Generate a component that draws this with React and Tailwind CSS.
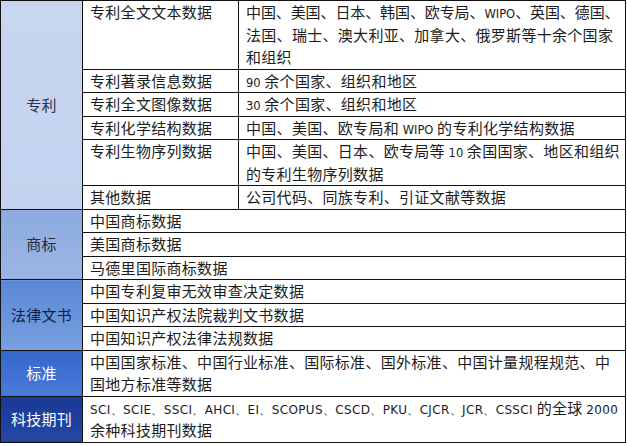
import React from "react"

const cjk = { fontFamily: '"Noto Sans CJK SC", "Noto Sans", sans-serif' }

const L = ({ children, wide }) => (
  <span
    className={`font-['DejaVu_Sans',sans-serif] leading-none ${
      wide ? "text-[12px] tracking-[0.35px]" : "text-[11.5px] tracking-normal"
    }`}
  >
    {children}
  </span>
)

const patentRows = [
  {
    name: "专利全文文本数据",
    desc: [
      <span className="tracking-[-0.1px]">
        中国、美国、日本、韩国、欧专局、<L>WIPO</L>、英国、德国、
      </span>,
      "法国、瑞士、澳大利亚、加拿大、俄罗斯等十余个国家",
      "和组织",
    ],
  },
  { name: "专利著录信息数据", desc: [<><L>90</L> 余个国家、组织和地区</>] },
  { name: "专利全文图像数据", desc: [<><L>30</L> 余个国家、组织和地区</>] },
  { name: "专利化学结构数据", desc: [<>中国、美国、欧专局和 <L>WIPO</L> 的专利化学结构数据</>] },
  {
    name: "专利生物序列数据",
    desc: [<>中国、美国、日本、欧专局等 <L>10</L> 余国国家、地区和组织</>, "的专利生物序列数据"],
  },
  { name: "其他数据", desc: ["公司代码、同族专利、引证文献等数据"] },
]

const groups = [
  {
    label: "商标",
    cls: "bg-gradient-to-b from-[#8caade] to-[#9ab6e4] text-[#1f2a44]",
    rows: [["中国商标数据"], ["美国商标数据"], ["马德里国际商标数据"]],
  },
  {
    label: "法律文书",
    cls: "bg-gradient-to-b from-[#5a88d5] to-[#78a0e0] text-[#14203a]",
    rows: [["中国专利复审无效审查决定数据"], ["中国知识产权法院裁判文书数据"], ["中国知识产权法律法规数据"]],
  },
  {
    label: "标准",
    cls: "bg-gradient-to-b from-[#3567cc] to-[#4a7bd8] text-white",
    rows: [["中国国家标准、中国行业标准、国际标准、国外标准、中国计量规程规范、中", "国地方标准等数据"]],
  },
  {
    label: "科技期刊",
    cls: "bg-gradient-to-b from-[#183993] to-[#2547a6] text-white",
    rows: [
      [
        <>
          <L wide>SCI、SCIE、SSCI、AHCI、EI、SCOPUS、CSCD、PKU、CJCR、JCR、CSSCI</L> 的全球 <L wide>2000</L>
        </>,
        "余种科技期刊数据",
      ],
    ],
  },
]

const Lines = ({ items }) =>
  items.map((t, i) => (
    <div key={i} className="whitespace-nowrap h-[22.5px]">
      {t}
    </div>
  ))

export default function App() {
  const td = "border border-[#111] align-top pl-[7px] pr-0 py-0"
  return (
    <div className="w-[627px] h-[446px] bg-white overflow-hidden" style={cjk}>
      <table className="border-collapse table-fixed w-[625px] text-[15px] leading-[22.5px] text-[#1c1c1c] tracking-[0.3px]">
        <colgroup>
          <col className="w-[82px]" />
          <col className="w-[156px]" />
          <col className="w-[387px]" />
        </colgroup>
        <tbody>
          {patentRows.map((r, i) => (
            <tr key={r.name}>
              {i === 0 && (
                <td
                  rowSpan={patentRows.length}
                  className="border border-[#111] bg-gradient-to-b from-[#c8d6f0] to-[#c3d2ee] text-center align-middle text-[#2a3350]"
                >
                  专利
                </td>
              )}
              <td className={td}>
                <Lines items={[r.name]} />
              </td>
              <td className={td}>
                <Lines items={r.desc} />
              </td>
            </tr>
          ))}
          {groups.map((g) =>
            g.rows.map((r, i) => (
              <tr key={g.label + i}>
                {i === 0 && (
                  <td rowSpan={g.rows.length} className={`border border-[#111] text-center align-middle ${g.cls}`}>
                    {g.label}
                  </td>
                )}
                <td colSpan={2} className={td}>
                  <Lines items={r} />
                </td>
              </tr>
            ))
          )}
        </tbody>
      </table>
    </div>
  )
}
